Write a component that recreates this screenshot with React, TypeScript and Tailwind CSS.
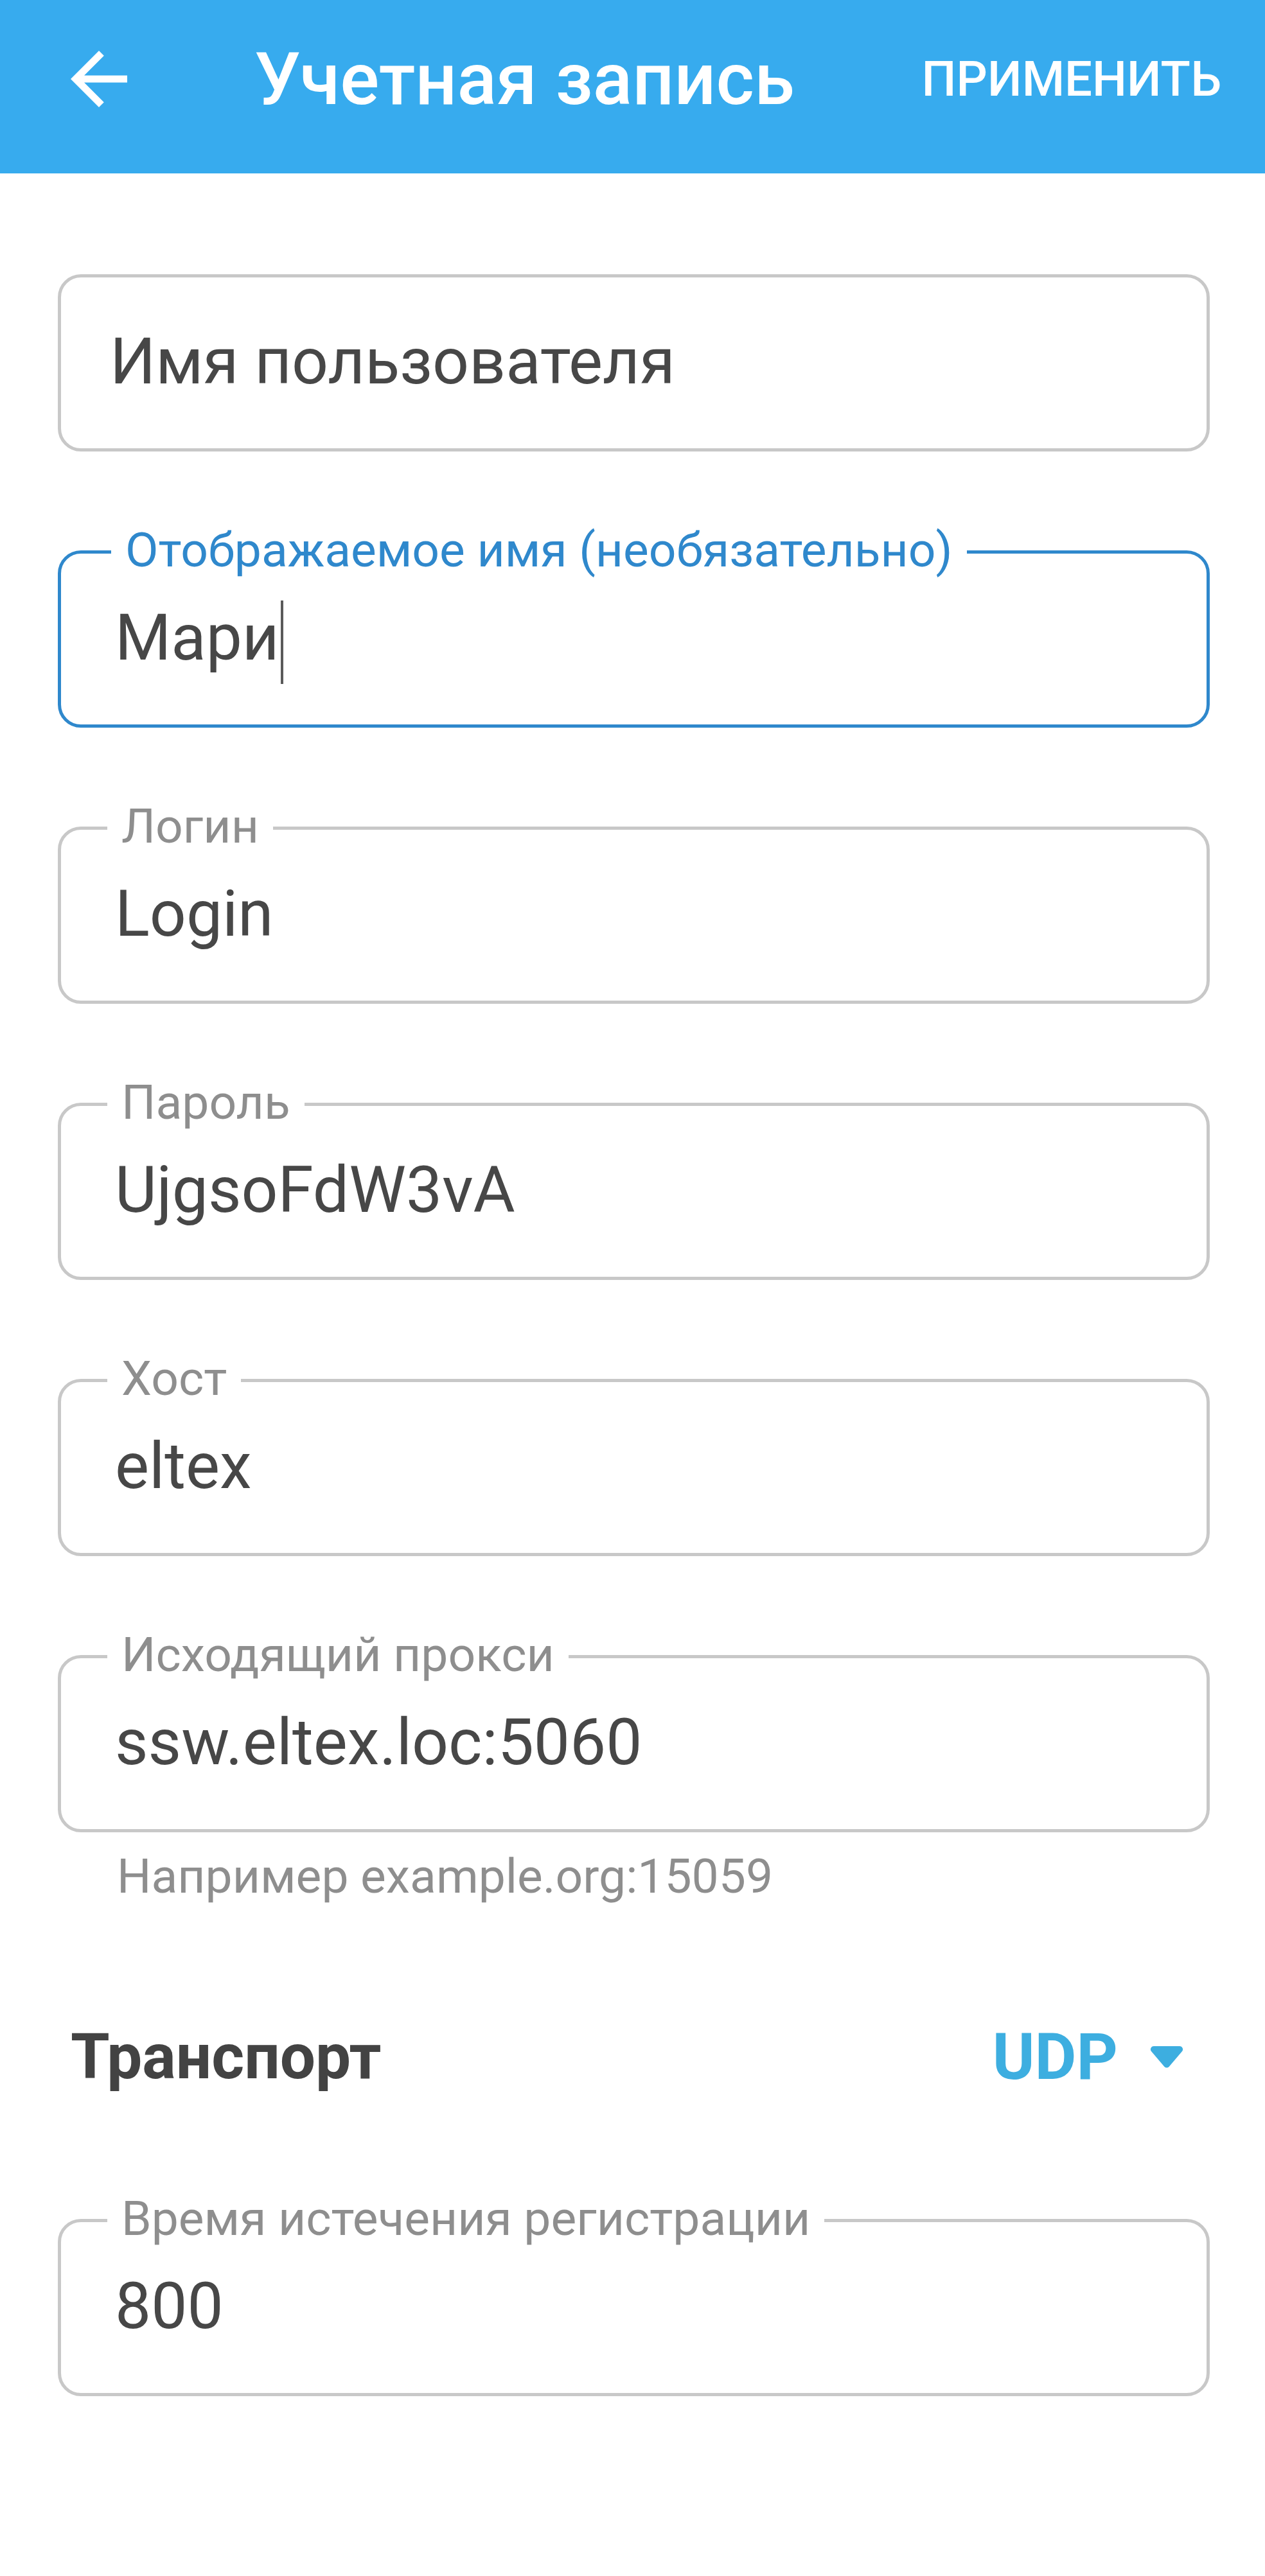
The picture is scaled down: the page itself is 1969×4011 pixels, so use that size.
import React from "react";

type Field = {
  label?: string;
  value?: string;
  placeholder?: string;
  focused?: boolean;
};

const fields: Field[] = [
  { placeholder: "Имя пользователя" },
  { label: "Отображаемое имя (необязательно)", value: "Мари", focused: true },
  { label: "Логин", value: "Login" },
  { label: "Пароль", value: "UjgsoFdW3vA" },
  { label: "Хост", value: "eltex" },
  { label: "Исходящий прокси", value: "ssw.eltex.loc:5060" },
];

const OutlinedField = ({ label, value, placeholder, focused }: Field) => {
  return (
    <div
      className={`relative h-[276px] rounded-[36px] border-[5px] bg-white ${
        focused ? "border-[#2f88cc]" : "border-[#c8c8c8]"
      }`}
    >
      {label && (
        <span
          className={`absolute -top-[43px] bg-white px-[22px] text-[75px] leading-none whitespace-nowrap ${
            focused ? "left-[78px] text-[#2f88cc]" : "left-[72px] text-[#8e8e8e]"
          }`}
        >
          {label}
        </span>
      )}
      {placeholder ? (
        <div className="pl-[76px] pt-[81px] text-[100px] leading-none text-[#474747]">
          {placeholder}
        </div>
      ) : (
        <div className="flex items-start pl-[84px] pt-[81px] text-[100px] leading-none text-[#474747]">
          <span>{value}</span>
          {focused && <span className="-mt-[8px] ml-[2px] h-[130px] w-[4px] bg-[#5a5a5a]" />}
        </div>
      )}
    </div>
  );
};

export default function App() {
  return (
    <div className="min-h-[4011px] w-[1969px] bg-white font-['Roboto',sans-serif]">
      <header className="flex h-[270px] items-center bg-[#37abee] pb-[24px] pl-[88px] pr-[68px] text-white">
        <svg width="132" height="132" viewBox="0 0 24 24" fill="white">
          <path d="M20 11H7.83l5.59-5.59L12 4l-8 8 8 8 1.41-1.41L7.83 13H20v-2z" />
        </svg>
        <h1 className="ml-[176px] text-[114px] font-medium leading-none">Учетная запись</h1>
        <button className="ml-auto text-[76px] font-medium leading-none">ПРИМЕНИТЬ</button>
      </header>

      <main className="pl-[90px] pr-[86px] pt-[157px]">
        <div className="flex flex-col gap-[154px]">
          {fields.map((f, i) => (
            <OutlinedField key={i} {...f} />
          ))}
        </div>
        <p className="mt-[31px] pl-[92px] text-[75px] leading-none text-[#8e8e8e]">
          Например example.org:15059
        </p>

        <div className="mt-[194px] flex items-center justify-between pl-[20px] pr-[41px]">
          <span className="text-[98px] font-bold leading-none text-[#434343]">Транспорт</span>
          <div className="flex items-center gap-[50px]">
            <span className="text-[100px] font-bold leading-none text-[#3daee0]">UDP</span>
            <svg width="52" height="36" viewBox="0 0 52 36" fill="#3daee0">
              <path d="M6 1h40a5 5 0 0 1 3.6 8.5L29.6 33a5 5 0 0 1-7.2 0L2.4 9.5A5 5 0 0 1 6 1z" />
            </svg>
          </div>
        </div>

        <div className="mt-[202px]">
          <OutlinedField label="Время истечения регистрации" value="800" />
        </div>
      </main>
    </div>
  );
}
